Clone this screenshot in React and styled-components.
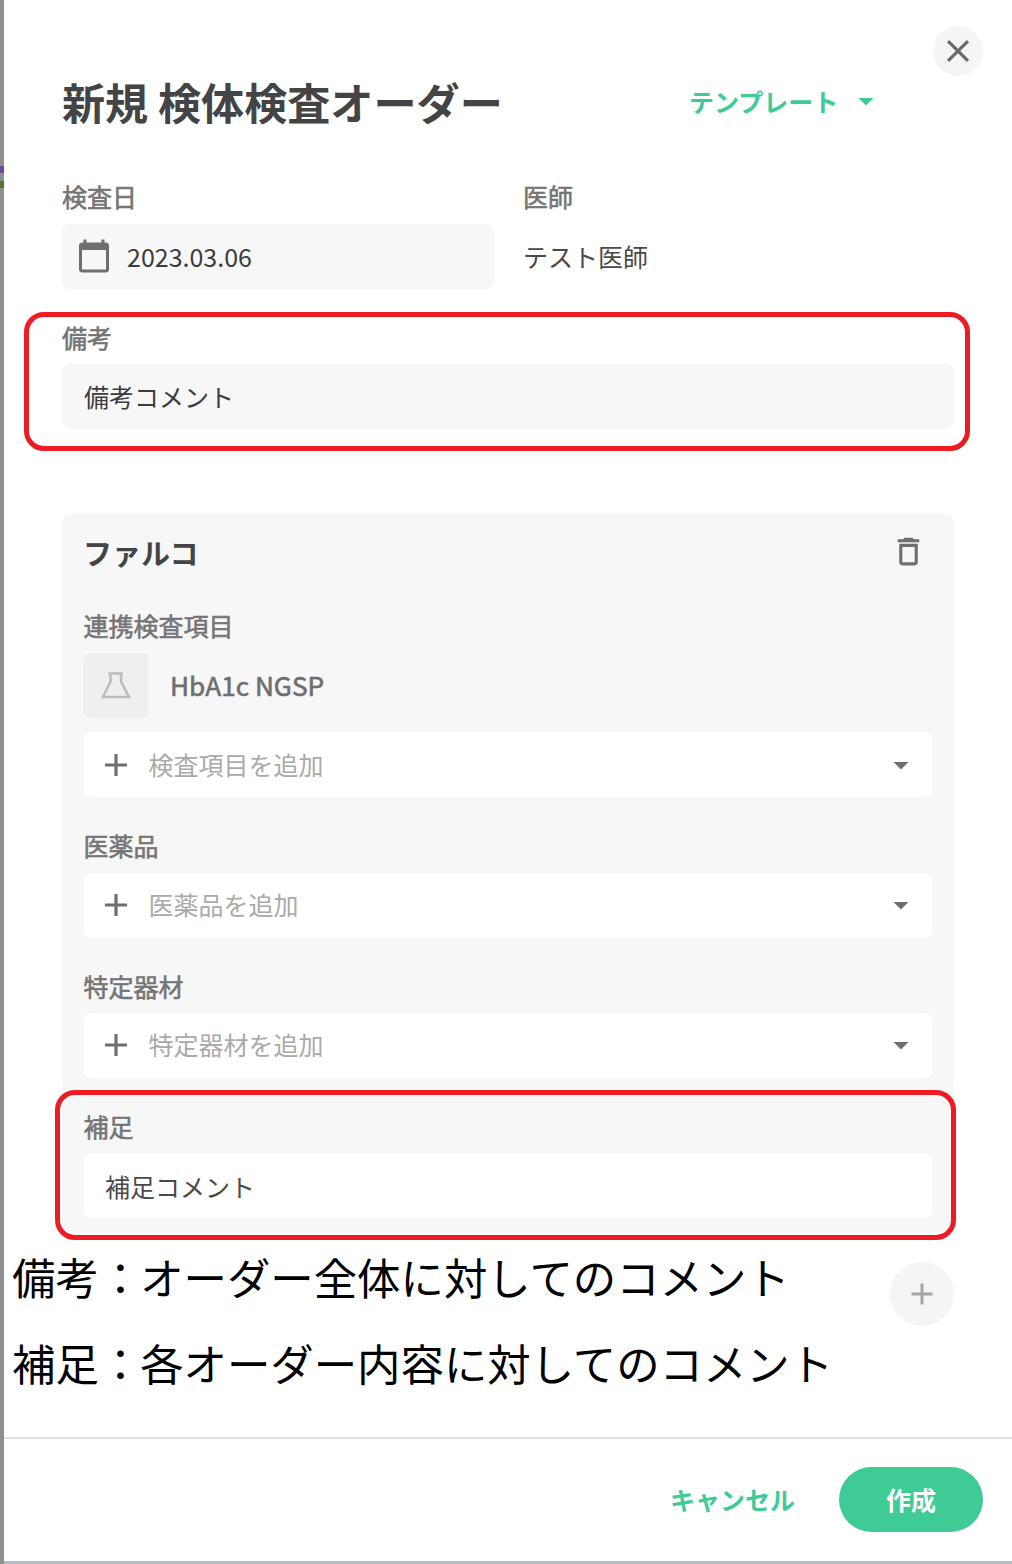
import styled, { createGlobalStyle } from 'styled-components';
import { MdAdd, MdArrowDropDown, MdCalendarToday, MdClose, MdOutlineDelete } from 'react-icons/md';

const GREEN = '#3ecb96';

function App() {
  return (
    <>
      <GlobalStyle />
      <Page>
        <Rail>
          <RailMark color="#6f4a9a" />
          <RailMark color="#4a7a2a" />
        </Rail>
        <Modal>
          <CloseRow>
            <CloseButton><MdClose size={38} /></CloseButton>
          </CloseRow>
          <TitleRow>
            <Title>新規 検体検査オーダー</Title>
            <TemplateButton>
              テンプレート
              <MdArrowDropDown size={36} />
            </TemplateButton>
          </TitleRow>

          <Form>
            <TopGrid>
              <div>
                <Label>検査日</Label>
                <DateInput>
                  <MdCalendarToday size={36} color="#6e6e6e" />
                  2023.03.06
                </DateInput>
              </div>
              <div>
                <Label>医師</Label>
                <DoctorName>テスト医師</DoctorName>
              </div>
            </TopGrid>

            <NoteField>
              <NoteHighlight />
              <Label>備考</Label>
              <TextInput>備考コメント</TextInput>
            </NoteField>

            <Card>
              <CardHead>
                <CardTitle>ファルコ</CardTitle>
                <MdOutlineDelete size={37} color="#6e6e6e" />
              </CardHead>

              <Section>
                <Label>連携検査項目</Label>
                <LinkedItem>
                  <ItemTile>
                    <svg width="30" height="27" viewBox="0 0 30 27" fill="none" stroke="#bdbdbd" strokeWidth="2.6">
                      <path d="M7 1.5h15M9.5 1.5v8L2 25h26L20 9.5v-8" />
                    </svg>
                  </ItemTile>
                  <ItemName>HbA1c NGSP</ItemName>
                </LinkedItem>
                <AddSelect label="検査項目を追加" />
              </Section>

              <Section>
                <Label>医薬品</Label>
                <AddSelect label="医薬品を追加" />
              </Section>

              <Section>
                <Label>特定器材</Label>
                <AddSelect label="特定器材を追加" />
              </Section>

              <SupplementSection>
                <SupplementHighlight />
                <Label>補足</Label>
                <WhiteInput>補足コメント</WhiteInput>
              </SupplementSection>
            </Card>

            <AddRow>
              <AddCardButton><MdAdd size={36} /></AddCardButton>
            </AddRow>
          </Form>

          <Annotation>
            <p>備考<Colon>：</Colon>オーダー全体に対してのコメント</p>
            <p>補足<Colon>：</Colon>各オーダー内容に対してのコメント</p>
          </Annotation>

          <Footer>
            <CancelButton>キャンセル</CancelButton>
            <CreateButton>作成</CreateButton>
          </Footer>
        </Modal>
      </Page>
    </>
  );
}

function AddSelect({ label }) {
  return (
    <SelectBox>
      <MdAdd size={38} color="#6e6e6e" />
      <Placeholder>{label}</Placeholder>
      <MdArrowDropDown size={36} color="#6e6e6e" />
    </SelectBox>
  );
}

const GlobalStyle = createGlobalStyle`
  * {
    box-sizing: border-box;
  }

  body {
    margin: 0;
    background: #fff;
    font-family: "Noto Sans CJK JP", "Noto Sans", sans-serif;
  }
`;

const Page = styled.div`
  width: 1012px;
  height: 1564px;
  display: flex;
  overflow: hidden;
`;

const Rail = styled.div`
  width: 4px;
  padding-top: 166px;
  display: flex;
  flex-direction: column;
  gap: 8px;
  background: #8f8f8f;
`;

const RailMark = styled.div`
  height: 7px;
  background: ${(p) => p.color};
`;

const Modal = styled.div`
  flex: 1;
  position: relative;
  display: flex;
  flex-direction: column;
  border-bottom: 3px solid #b3bdc6;
`;

const CloseRow = styled.div`
  height: 76px;
  padding: 26px 29px 0 0;
  display: flex;
  justify-content: flex-end;
`;

const CloseButton = styled.button`
  width: 50px;
  height: 50px;
  padding: 0;
  border: none;
  border-radius: 50%;
  background: #f5f5f5;
  color: #6a6a6a;
  display: flex;
  align-items: center;
  justify-content: center;
`;

const TitleRow = styled.div`
  height: 54px;
  padding-left: 58px;
  display: flex;
  align-items: center;
`;

const Title = styled.h1`
  margin: 0;
  width: 627px;
  font-size: 43.1px;
  line-height: 52px;
  padding-bottom: 4px;
  font-weight: 700;
  color: #444;
  white-space: nowrap;
`;

const TemplateButton = styled.button`
  padding: 0 0 5px;
  border: none;
  background: none;
  display: flex;
  align-items: center;
  gap: 10px;
  font-family: inherit;
  font-size: 25px;
  font-weight: 700;
  color: ${GREEN};
`;

const Form = styled.div`
  margin-top: 53.4px;
  padding: 0 58px;
`;

const TopGrid = styled.div`
  display: grid;
  grid-template-columns: 432px 1fr;
  column-gap: 29px;
`;

const Label = styled.div`
  height: 30px;
  margin-bottom: 10.4px;
  font-size: 25px;
  line-height: 26px;
  -webkit-text-stroke: 0.6px #757575;
  color: #757575;
`;

const TextInput = styled.div`
  height: 65px;
  padding: 0 22px 2px;
  display: flex;
  align-items: center;
  border-radius: 8px;
  background: #f7f7f7;
  font-size: 25px;
  color: #3d3d3d;
`;

const DateInput = styled(TextInput)`
  padding: 0 0 0 14px;
  gap: 15px;
`;

const DoctorName = styled.div`
  height: 65px;
  display: flex;
  align-items: center;
  font-size: 25px;
  color: #4a4a4a;
`;

const NoteField = styled.div`
  position: relative;
  margin-top: 35px;
`;

const Highlight = styled.div`
  position: absolute;
  border: 5px solid #ed1c24;
  border-radius: 20px;
  pointer-events: none;
`;

const NoteHighlight = styled(Highlight)`
  inset: -12px -16px -22px -38px;
`;

const Card = styled.div`
  margin-top: 84px;
  padding: 0 21px 14px;
  border-radius: 12px;
  background: #f7f7f7;
`;

const CardHead = styled.div`
  height: 80px;
  padding: 0 6px 3px 0;
  display: flex;
  align-items: center;
  justify-content: space-between;
`;

const CardTitle = styled.div`
  font-size: 29px;
  line-height: 40px;
  font-weight: 700;
  color: #444;
`;

const Section = styled.div`
  margin-top: 35px;

  ${CardHead} + & {
    margin-top: 19px;
  }

  ${Label} {
    padding-left: 0.5px;
  }
`;

const SupplementSection = styled(Section)`
  position: relative;
`;

const SupplementHighlight = styled(Highlight)`
  inset: -23px -23px -22px -28px;
`;

const LinkedItem = styled.div`
  height: 65px;
  margin-top: 11px;
  display: flex;
  align-items: center;
  gap: 22px;
`;

const ItemTile = styled.div`
  width: 65px;
  height: 65px;
  display: flex;
  align-items: center;
  justify-content: center;
  border-radius: 8px 0 0 8px;
  background: #efefef;
`;

const ItemName = styled.div`
  padding-bottom: 2px;
  font-size: 26.2px;
  -webkit-text-stroke: 0.6px #6e6e6e;
  color: #6e6e6e;
`;

const SelectBox = styled.div`
  height: 65px;
  margin-top: 14px;
  padding: 0 14px;
  display: flex;
  align-items: center;
  gap: 13.5px;
  border-radius: 8px;
  background: #fff;

  ${Label} + & {
    margin-top: 0;
  }
`;

const Placeholder = styled.div`
  flex: 1;
  padding-bottom: 2px;
  font-size: 25px;
  color: #aaa;
`;

const WhiteInput = styled(TextInput)`
  background: #fff;
  color: #4a4a4a;
  padding-bottom: 0;
`;

const AddRow = styled.div`
  margin-top: 30px;
  display: flex;
  justify-content: flex-end;
`;

const AddCardButton = styled.button`
  width: 64px;
  height: 64px;
  padding: 0;
  border: none;
  border-radius: 50%;
  background: #f5f5f5;
  color: #a5a5a5;
  display: flex;
  align-items: center;
  justify-content: center;
`;

const Annotation = styled.div`
  position: absolute;
  left: 8px;
  top: 1233px;
  color: #000;
  font-size: 43.4px;
  line-height: 86px;
  white-space: nowrap;

  p {
    margin: 0;
  }
`;

const Colon = styled.span`
  margin-right: -2px;
`;

const Footer = styled.div`
  margin-top: auto;
  height: 124px;
  padding: 28px 29px 0 0;
  display: flex;
  align-items: flex-start;
  justify-content: flex-end;
  gap: 44px;
  border-top: 2px solid #e0e0e0;
`;

const CancelButton = styled.button`
  height: 65px;
  padding: 0 0 2px;
  border: none;
  background: none;
  font-family: inherit;
  font-size: 25px;
  font-weight: 700;
  color: ${GREEN};
`;

const CreateButton = styled.button`
  width: 144px;
  height: 65px;
  padding: 0 0 2px;
  border: none;
  border-radius: 33px;
  background: ${GREEN};
  font-family: inherit;
  font-size: 25px;
  font-weight: 700;
  color: #fff;
`;

export default App;
